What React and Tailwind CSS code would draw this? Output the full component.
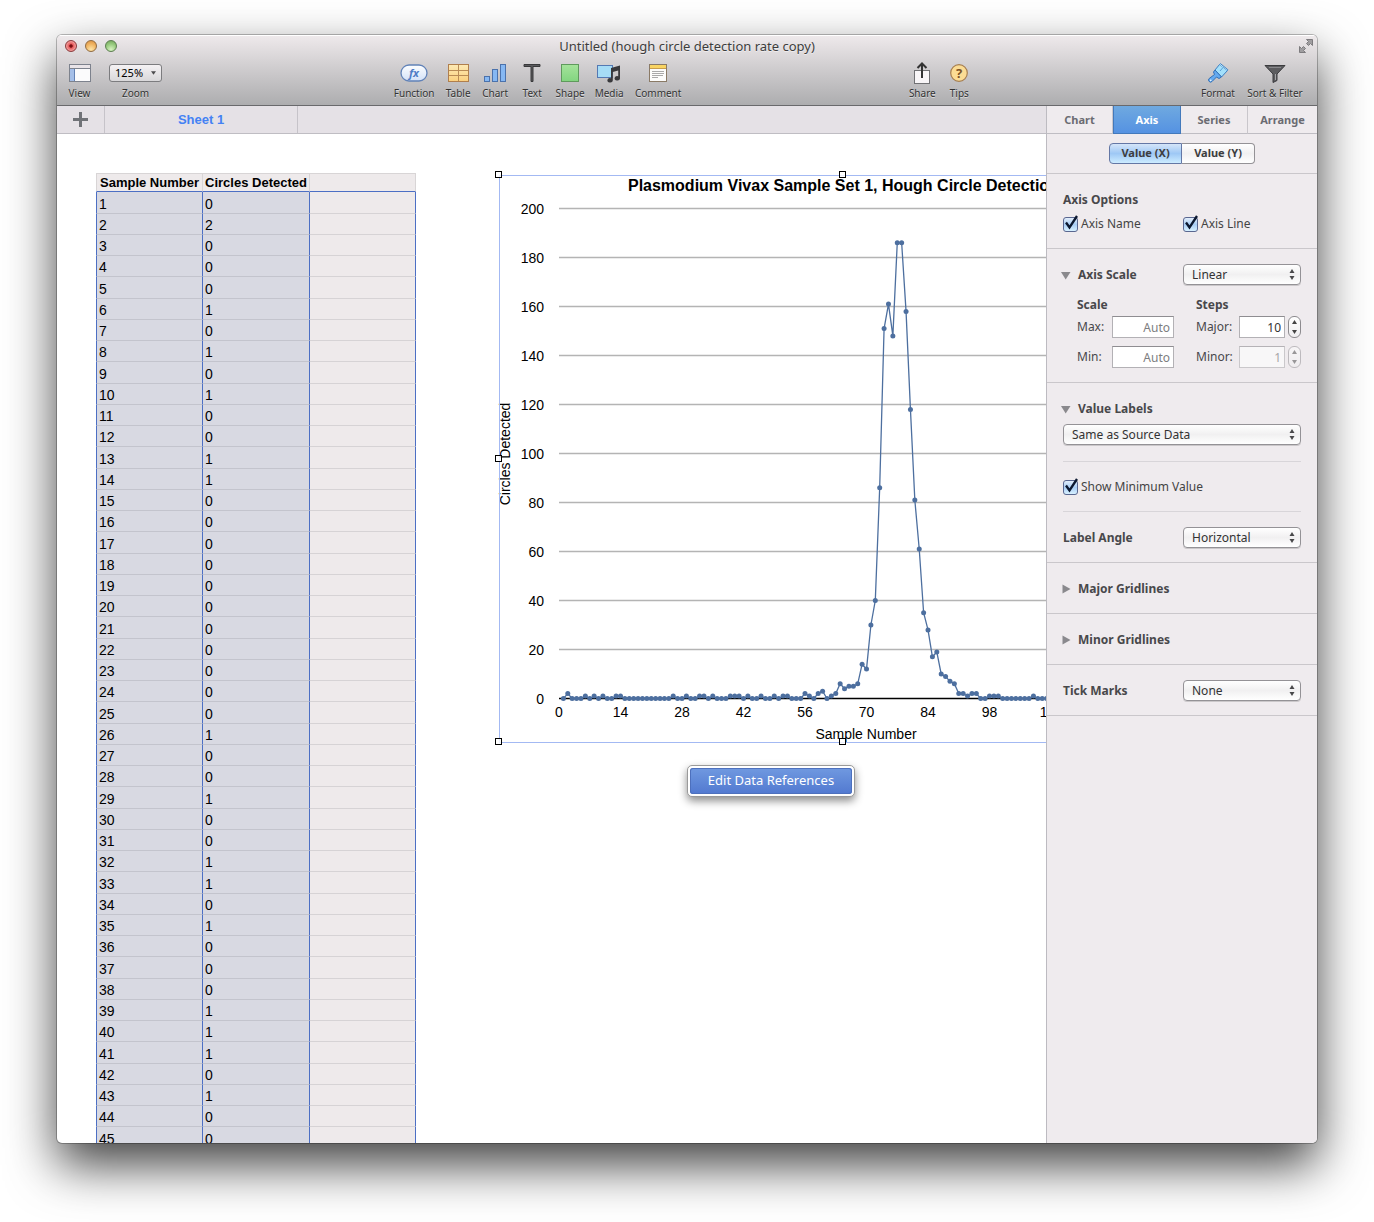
import React, { useState } from 'react';

// Circles found for samples 1..111
const DETECTED = [
  0, 2, 0, 0, 0, 1, 0, 1, 0, 1, 0, 0, 1, 1, 0, 0, 0, 0, 0, 0,
  0, 0, 0, 0, 0, 1, 0, 0, 1, 0, 0, 1, 1, 0, 1, 0, 0, 0, 1, 1,
  1, 0, 1, 0, 0, 1, 0, 0, 1, 0, 1, 1, 0, 0, 0, 2, 1, 0, 2, 3,
  0, 1, 2, 6, 4, 5, 5, 6, 14, 12, 30, 40, 86, 151, 161, 148, 186, 186, 158, 118,
  81, 61, 35, 28, 17, 19, 10, 9, 7, 6, 2, 2, 1, 2, 2, 0, 0, 1, 1, 1,
  0, 0, 0, 0, 0, 0, 0, 1, 0, 0, 0,
];

const Y_TICKS = [0, 20, 40, 60, 80, 100, 120, 140, 160, 180, 200];
const X_TICKS = [0, 14, 28, 42, 56, 70, 84, 98, 112, 126, 140];

const px = (n) => 63 + n * 4.393;
const py = (v) => 525.5 - v * 2.45;

/* ---------- Toolbar icons ---------- */

const ViewIcon = () => (
  <svg width="22" height="18" viewBox="0 0 22 18">
    <rect x="0.5" y="0.5" width="21" height="17" fill="#fbfbfc" stroke="#7d828d" />
    <rect x="1" y="1" width="20" height="3" fill="#e9e4e8" />
    <path d="M1 4.5h20" stroke="#7d828d" />
    <rect x="1" y="5" width="4" height="12" fill="#a5bfe8" />
    <path d="M5.5 5v12" stroke="#6482b4" />
  </svg>
);

const FunctionIcon = () => (
  <svg width="28" height="18" viewBox="0 0 28 18">
    <defs>
      <linearGradient id="fxFill" x1="0" y1="0" x2="0" y2="1">
        <stop offset="0" stopColor="#fdfeff" />
        <stop offset="1" stopColor="#d3e2f8" />
      </linearGradient>
    </defs>
    <rect x="1" y="1" width="26" height="16" rx="8" fill="url(#fxFill)" stroke="#6283b8" strokeWidth="1.3" />
    <text x="14" y="13" textAnchor="middle" fontSize="11" fontWeight="700" fontStyle="italic" fill="#4e7dc6">fx</text>
  </svg>
);

const TableIcon = () => (
  <svg width="21" height="18" viewBox="0 0 21 18">
    <defs>
      <linearGradient id="tblFill" x1="0" y1="0" x2="0" y2="1">
        <stop offset="0" stopColor="#fdeab5" />
        <stop offset="1" stopColor="#fbd07e" />
      </linearGradient>
    </defs>
    <rect x="0.5" y="0.5" width="20" height="17" fill="url(#tblFill)" stroke="#b07f4d" />
    <path d="M10.5 1v16M1 6.5h19M1 11.5h19" stroke="#b98b55" />
  </svg>
);

const ChartIcon = () => (
  <svg width="22" height="18" viewBox="0 0 22 18">
    <g fill="#86b8f3" stroke="#4b72ac">
      <rect x="0.5" y="12.5" width="5" height="5" />
      <rect x="8.5" y="5.5" width="5" height="12" />
      <rect x="16.5" y="0.5" width="5" height="17" />
    </g>
  </svg>
);

const TextIcon = () => (
  <svg width="18" height="18" viewBox="0 0 18 18">
    <path d="M1 0.5h16v2h-7v15h-2v-15h-7z" fill="#5a5a5d" stroke="#39393b" />
  </svg>
);

const ShapeIcon = () => (
  <svg width="18" height="18" viewBox="0 0 18 18">
    <defs>
      <linearGradient id="shapeFill" x1="0" y1="0" x2="0" y2="1">
        <stop offset="0" stopColor="#a5e39b" />
        <stop offset="1" stopColor="#82d580" />
      </linearGradient>
    </defs>
    <rect x="0.5" y="0.5" width="17" height="17" fill="url(#shapeFill)" stroke="#5f9a5d" />
  </svg>
);

const MediaIcon = () => (
  <svg width="24" height="19" viewBox="0 0 24 19">
    <rect x="0.5" y="1.5" width="15" height="12" fill="#a6dcf6" stroke="#5479b3" />
    <path d="M14 4l9-2.500v13a2.700 2.200 0 1 1-1.800-2.200V6.500l-5.400 1.500v8.500a2.700 2.200 0 1 1-1.800-2.200z" fill="#39393c" />
  </svg>
);

const CommentIcon = () => (
  <svg width="18" height="18" viewBox="0 0 18 18">
    <rect x="0.5" y="0.5" width="17" height="17" fill="#fcfcfb" stroke="#8a7a66" />
    <rect x="1" y="1" width="16" height="4" fill="#f9d462" />
    <path d="M1 4.5h16" stroke="#c99d4c" />
    <path d="M3 7.5h12M3 9.5h12M3 11.5h11M3 13.5h6" stroke="#a9a9a9" />
  </svg>
);

const ShareIcon = () => (
  <svg width="18" height="22" viewBox="0 0 18 22">
    <rect x="1.5" y="8.5" width="15" height="13" fill="#f8f5f7" stroke="#717174" />
    <path d="M9 16V3" stroke="#333" strokeWidth="2" />
    <path d="M4.5 6L9 1.5L13.5 6" fill="none" stroke="#333" strokeWidth="2" />
  </svg>
);

const TipsIcon = () => (
  <svg width="18" height="18" viewBox="0 0 18 18">
    <circle cx="9" cy="9" r="8.3" fill="#fbdc94" stroke="#a77f50" strokeWidth="1.2" />
    <text x="9" y="13.5" textAnchor="middle" fontSize="13" fontWeight="700" fill="#7b5225">?</text>
  </svg>
);

const FormatIcon = () => (
  <svg width="22" height="21" viewBox="0 0 22 21">
    <path d="M8 7L12.5 1.5L20.5 7.5L14.5 14z" fill="#a3e0fb" stroke="#3d7fc2" />
    <path d="M12.5 1.5L13.5 0.7L20.8 6.7L20.5 7.5" fill="#c6eeff" stroke="#3d7fc2" />
    <path d="M16 4.5l-3 3.5" stroke="#5a9fd6" />
    <path d="M8 7L14.5 14L12 15.5L9.5 14L5 18.5a2 2 0 1 1-2.8-3L7.5 11.5L6.5 9z" fill="#64aaf0" stroke="#346fb4" />
    <circle cx="3.7" cy="17.3" r="0.9" fill="#e4f4ff" />
  </svg>
);

const FilterIcon = () => (
  <svg width="22" height="19" viewBox="0 0 22 19">
    <path d="M1 1.5h20L13 10v6.5l-4 2V10z" fill="#5c5c5f" stroke="#3b3b3e" />
    <path d="M5 3.5h12" stroke="#88888b" />
    <path d="M11.5 10v6" stroke="#a4a4a7" />
  </svg>
);

const FullscreenIcon = () => (
  <svg width="14" height="14" viewBox="0 0 14 14" fill="#a09ea0" stroke="#7d7b7e">
    <path d="M7.5 0.5h6v6l-2-2l-2 2l-2-2l2-2z" />
    <path d="M6.5 13.5h-6v-6l2 2l2-2l2 2l-2 2z" />
  </svg>
);

/* ---------- Toolbar ---------- */

const ToolItem = ({ label, icon, width }) => (
  <button type="button" className={`flex flex-col items-center ${width}`}>
    <span className="flex h-[22px] items-center justify-center">{icon}</span>
    <span className="mt-[3px] whitespace-nowrap text-[10px] leading-3 text-[#333] [text-shadow:0_1px_0_rgba(255,255,255,0.5)]">
      {label}
    </span>
  </button>
);

const LIGHTS = [
  { name: 'Close', color: 'bg-[radial-gradient(circle_at_50%_50%,#7a0f12_18%,#e4585a_30%,#f29a98_65%,#c43c3e)] border-[#8a3a3c]' },
  { name: 'Minimise', color: 'bg-[radial-gradient(circle_at_50%_85%,#fde5a8,#f0b463_55%,#d98e3e)] border-[#8f6a41]' },
  { name: 'Enlarge', color: 'bg-[radial-gradient(circle_at_50%_85%,#d8f3c2,#98cb7f_55%,#6fa258)] border-[#5c7d50]' },
];

const Toolbar = () => (
  <header className="border-b border-[#69696c] bg-linear-to-b from-[#efeaec] to-[#adadaf] pt-px shadow-[inset_0_1px_0_#fff]">
    <div className="flex h-5 items-center justify-between px-1">
      <div className="flex w-16 gap-2 pl-1">
        {LIGHTS.map((light) => (
          <button key={light.name} type="button" aria-label={light.name} className={`size-3 rounded-full border ${light.color}`} />
        ))}
      </div>
      <h1 className="truncate text-[13px] leading-5 text-[#3d3d3d] [text-shadow:0_1px_0_rgba(255,255,255,0.5)]">
        Untitled (hough circle detection rate copy)
      </h1>
      <div className="flex w-16 justify-end">
        <button type="button" aria-label="Full screen"><FullscreenIcon /></button>
      </div>
    </div>

    <div className="flex items-start justify-between pt-[6px] pr-[10px] pb-[6px] pl-1">
      <div className="flex">
        <ToolItem label="View" icon={<ViewIcon />} width="w-[37px]" />
        <div className="flex w-[75px] flex-col items-center">
          <div className="grid h-[22px] items-center">
            <select
              id="zoom"
              defaultValue="125%"
              className="col-start-1 row-start-1 h-[18px] w-[53px] appearance-none rounded-[3px] border border-[#7c7c7f] bg-linear-to-b from-[#f5f2f4] to-[#d9d8da] pl-[5px] text-[11px] leading-4 text-black"
            >
              <option>125%</option>
              <option>100%</option>
            </select>
            <svg className="pointer-events-none col-start-1 row-start-1 mr-[6px] justify-self-end" width="5" height="4" viewBox="0 0 6 4">
              <path d="M0 0h6L3 4z" fill="#4c4c4e" />
            </svg>
          </div>
          <label htmlFor="zoom" className="mt-[3px] text-[10px] leading-3 text-[#333] [text-shadow:0_1px_0_rgba(255,255,255,0.5)]">
            Zoom
          </label>
        </div>
      </div>
      <div className="flex">
        <ToolItem label="Function" icon={<FunctionIcon />} width="w-[51px]" />
        <ToolItem label="Table" icon={<TableIcon />} width="w-[37px]" />
        <ToolItem label="Chart" icon={<ChartIcon />} width="w-[37px]" />
        <ToolItem label="Text" icon={<TextIcon />} width="w-[37px]" />
        <ToolItem label="Shape" icon={<ShapeIcon />} width="w-[39px]" />
        <ToolItem label="Media" icon={<MediaIcon />} width="w-[39px]" />
        <ToolItem label="Comment" icon={<CommentIcon />} width="w-[59px]" />
      </div>
      <div className="flex">
        <ToolItem label="Share" icon={<ShareIcon />} width="w-[38px]" />
        <ToolItem label="Tips" icon={<TipsIcon />} width="w-9" />
      </div>
      <div className="flex">
        <ToolItem label="Format" icon={<FormatIcon />} width="w-[50px]" />
        <ToolItem label="Sort & Filter" icon={<FilterIcon />} width="w-16" />
      </div>
    </div>
  </header>
);

/* ---------- Sheet ---------- */

const SheetTabs = () => (
  <nav className="flex h-7 border-b border-[#bfbdc3] bg-[#e5e1e6]">
    <button type="button" aria-label="Add sheet" className="flex w-12 items-center justify-center border-r border-[#c6c3c9]">
      <svg width="15" height="15" viewBox="0 0 15 15">
        <path d="M7.5 0v15M0 7.5h15" stroke="#707277" strokeWidth="3" />
      </svg>
    </button>
    <button type="button" className="w-[193px] border-r border-[#c6c3c9] font-['Liberation_Sans',sans-serif] text-[13px] font-bold text-[#4482f4]">
      Sheet 1
    </button>
  </nav>
);

const DataTable = () => (
  <table className="w-80 shrink-0 table-fixed border-separate border-spacing-0 self-start bg-[#eeeaeb] font-['Liberation_Sans',sans-serif] text-black">
    <colgroup>
      <col className="w-[106px]" />
      <col className="w-[107px]" />
      <col className="w-[107px]" />
    </colgroup>
    <thead>
      <tr className="h-[19px] text-[13px] leading-4">
        <th className="border-t border-l border-t-[#d8d5d6] border-l-[#d8d5d6] border-b border-b-[#4c6fc4] p-0 align-bottom whitespace-nowrap">Sample Number</th>
        <th className="border-t border-l border-t-[#d8d5d6] border-l-[#d8d5d6] border-b border-b-[#4c6fc4] p-0 align-bottom whitespace-nowrap">Circles Detected</th>
        <th className="border-x border-t border-x-[#d8d5d6] border-t-[#d8d5d6] border-b border-b-[#4c6fc4] p-0" />
      </tr>
    </thead>
    <tbody className="text-[14px] leading-[18px]">
      {DETECTED.slice(0, 45).map((value, i) => (
        <tr key={i} className="h-[21px] nth-[4n+1]:h-[22px]">
          <td className="border-b border-l border-b-[#c3c4cd] border-l-[#4c6fc4] bg-[#d8d9e2] py-0 pr-0 pl-[2px] align-bottom">{i + 1}</td>
          <td className="border-b border-l border-b-[#c3c4cd] border-l-[#4c6fc4] bg-[#d8d9e2] py-0 pr-0 pl-[2px] align-bottom">{value}</td>
          <td className="border-x border-b border-x-[#4c6fc4] border-b-[#d6d3d5] p-0" />
        </tr>
      ))}
    </tbody>
  </table>
);

const HANDLES = [
  [2.5, 1.5], [346.5, 1.5], [690.5, 1.5],
  [2.5, 285.5], [690.5, 285.5],
  [2.5, 568.5], [346.5, 568.5], [690.5, 568.5],
];

const CirclesChart = () => (
  <svg width="694" height="570" viewBox="0 0 694 570" className="shrink-0 self-start overflow-visible font-['Liberation_Sans',sans-serif]" role="img" aria-label="Circles detected per sample">
    {Y_TICKS.map((v) => (
      <g key={v}>
        <path d={`M${px(0)} ${py(v)}H${px(140)}`} stroke={v === 0 ? '#000' : '#b4b4b4'} strokeWidth="1.4" />
        <text x="48" y={py(v) + 5.5} textAnchor="end" fontSize="14">{v}</text>
      </g>
    ))}
    {X_TICKS.map((n) => (
      <text key={n} x={px(n)} y="544" textAnchor="middle" fontSize="14">{n}</text>
    ))}
    <text x="367" y="18" textAnchor="middle" fontSize="16" fontWeight="700">
      Plasmodium Vivax Sample Set 1, Hough Circle Detection Rate
    </text>
    <text x="370" y="566" textAnchor="middle" fontSize="14">Sample Number</text>
    <text transform="translate(14 281) rotate(-90)" textAnchor="middle" fontSize="14">Circles Detected</text>
    <polyline
      points={DETECTED.map((v, i) => `${px(i + 1)},${py(v)}`).join(' ')}
      fill="none"
      stroke="#4d6f9f"
      strokeWidth="1.3"
    />
    {DETECTED.map((v, i) => (
      <circle key={i} cx={px(i + 1)} cy={py(v)} r="2.5" fill="#4d6f9f" />
    ))}
    <rect x="3.5" y="2.5" width="687" height="567" fill="none" stroke="#a3b9f3" />
    {HANDLES.map(([x, y]) => (
      <rect key={`${x}-${y}`} x={x - 3} y={y - 3} width="6" height="6" fill="#fff" fillOpacity="0.8" stroke="#000" />
    ))}
  </svg>
);

/* ---------- Inspector ---------- */

const Popup = ({ id, options, className, label }) => (
  <div className={`grid items-center ${className}`}>
    <select
      id={id}
      aria-label={label}
      className="col-start-1 row-start-1 h-[21px] w-full appearance-none rounded-[4px] border border-[#949296] bg-linear-to-b from-white via-[#f1f0f1] to-white pl-2 text-xs leading-4 text-[#333] shadow-[0_1px_0_rgba(0,0,0,0.15)]"
    >
      {options.map((o) => <option key={o}>{o}</option>)}
    </select>
    <svg className="pointer-events-none col-start-1 row-start-1 mr-[6px] justify-self-end" width="6" height="11" viewBox="0 0 6 11" fill="#48484a">
      <path d="M3 0L5.5 4h-5zM3 11L5.5 7h-5z" />
    </svg>
  </div>
);

const Check = ({ label, className = '' }) => {
  const [on, setOn] = useState(true);
  return (
    <label className={`flex h-[18px] items-center gap-[3px] text-xs text-[#444] ${className}`}>
      <span className="grid">
        <input
          type="checkbox"
          checked={on}
          onChange={() => setOn(!on)}
          className="col-start-1 row-start-1 size-[15px] appearance-none self-end rounded-[3px] border border-[#5a6790] bg-linear-to-b from-[#e3eefb] via-[#a9cdf5] to-[#d8f1ff]"
        />
        {on && (
          <svg className="pointer-events-none col-start-1 row-start-1 overflow-visible" width="15" height="15" viewBox="0 0 15 15">
            <path d="M3 5.5l3.5 5L14 -1" fill="none" stroke="#0c1830" strokeWidth="2.3" />
          </svg>
        )}
      </span>
      {label}
    </label>
  );
};

const Disclosure = ({ open = false, children }) => (
  <button type="button" aria-expanded={open} className="flex h-[18px] items-center gap-[7px] text-xs font-bold text-[#48484b]">
    <svg width="10" height="10" viewBox="0 0 10 10" fill="#8a898d">
      <path d={open ? 'M0 2h9.5L4.7 9.5z' : 'M1.5 0.5v9L9.500 5z'} />
    </svg>
    {children}
  </button>
);

const Stepper = ({ label, disabled }) => (
  <div className={`flex h-[22px] w-[13px] flex-col overflow-hidden rounded-[6px] border border-[#8d8b8f] bg-linear-to-b from-white to-[#efeef0] ${disabled ? 'opacity-50' : ''}`}>
    <button type="button" disabled={disabled} aria-label={`Increase ${label}`} className="flex h-[10px] items-center justify-center">
      <svg width="5" height="4" viewBox="0 0 5 4"><path d="M2.5 0L5 4H0z" fill="#444" /></svg>
    </button>
    <button type="button" disabled={disabled} aria-label={`Decrease ${label}`} className="flex h-[10px] items-center justify-center">
      <svg width="5" height="4" viewBox="0 0 5 4"><path d="M0 0h5L2.5 4z" fill="#444" /></svg>
    </button>
  </div>
);

const INPUT = 'h-[22px] border border-[#b3b1b5] border-t-[#8f8d91] bg-white pr-[3px] text-right text-xs placeholder:text-[#7d7d80]';

const ScaleField = ({ id, label }) => (
  <div className="flex w-[97px] items-center justify-between">
    <label htmlFor={id}>{label}</label>
    <input id={id} type="text" placeholder="Auto" className={`w-[62px] ${INPUT}`} />
  </div>
);

const StepField = ({ id, label, value, disabled }) => (
  <div className="flex w-[105px] items-center">
    <label htmlFor={id} className="flex-1">{label}</label>
    <input
      id={id}
      type="text"
      defaultValue={value}
      disabled={disabled}
      className={`mr-[3px] w-[46px] ${INPUT} ${disabled ? 'text-[#777] opacity-60' : 'text-[#333]'}`}
    />
    <Stepper label={id} disabled={disabled} />
  </div>
);

const TABS = [
  { name: 'Chart', width: 'w-[66px]' },
  { name: 'Axis', width: 'w-[68px]' },
  { name: 'Series', width: 'w-[67px]' },
  { name: 'Arrange', width: 'flex-1' },
];

const Inspector = () => {
  const [tab, setTab] = useState('Axis');
  const [axis, setAxis] = useState('X');

  return (
    <aside className="w-[271px] shrink-0 border-l border-[#bdbbc1] bg-[#efebee] text-xs text-[#48484b]">
      <nav className="flex h-7">
        {TABS.map(({ name, width }) => (
          <button
            key={name}
            type="button"
            onClick={() => setTab(name)}
            className={`${width} pt-px text-[11px] font-bold ${
              tab === name
                ? 'border border-t-0 border-[#4379bb] bg-linear-to-b from-[#6fa9e0] to-[#5592e2] text-white'
                : 'border-b border-[#bfbdc3] text-[#6b6b72] not-last:border-r not-last:border-r-[#c9c6cb]'
            }`}
          >
            {name}
          </button>
        ))}
      </nav>

      <div className="flex h-10 items-center justify-center border-b border-[#cac7cb]">
        {['X', 'Y'].map((a) => (
          <button
            key={a}
            type="button"
            onClick={() => setAxis(a)}
            className={`h-[21px] w-[73px] border text-[11px] font-bold text-[#3d3d40] first:rounded-l-[4px] last:rounded-r-[4px] ${
              axis === a
                ? 'border-[#6477a5] bg-linear-to-b from-[#d5e5f8] via-[#9ec8f5] to-[#cdecff]'
                : 'border-[#949296] bg-linear-to-b from-white via-[#f1f0f1] to-white first:border-r-0 last:border-l-0'
            }`}
          >
            Value ({a})
          </button>
        ))}
      </div>

      <section className="border-b border-[#cac7cb] px-4 pt-[17px] pb-[15px]">
        <h2 className="leading-[18px] font-bold">Axis Options</h2>
        <div className="mt-[6px] flex">
          <Check label="Axis Name" className="w-[120px]" />
          <Check label="Axis Line" />
        </div>
      </section>

      <section className="border-b border-[#cac7cb] pt-[15px] pr-4 pb-[14px] pl-[13px]">
        <div className="flex items-center justify-between pl-px">
          <Disclosure open>Axis Scale</Disclosure>
          <Popup label="Axis Scale" options={['Linear', 'Logarithmic']} className="w-[118px]" />
        </div>
        <div className="mt-[11px] flex justify-between pl-[17px]">
          <div>
            <h3 className="mb-[2px] leading-[18px] font-bold">Scale</h3>
            <div className="flex flex-col gap-2">
              <ScaleField id="max" label="Max:" />
              <ScaleField id="min" label="Min:" />
            </div>
          </div>
          <div>
            <h3 className="mb-[2px] leading-[18px] font-bold">Steps</h3>
            <div className="flex flex-col gap-2">
              <StepField id="major" label="Major:" value="10" />
              <StepField id="minor" label="Minor:" value="1" disabled />
            </div>
          </div>
        </div>
      </section>

      <section className="border-b border-[#cac7cb] pt-[17px] pr-4 pb-[14px] pl-[14px]">
        <Disclosure open>Value Labels</Disclosure>
        <div className="pl-[2px]">
          <Popup label="Value Labels" options={['Same as Source Data', 'Number']} className="mt-[6px]" />
          <div className="mt-4 border-y border-[#d8d5d9] pt-4 pb-[15px]">
            <Check label="Show Minimum Value" />
          </div>
          <div className="mt-[15px] flex items-center justify-between">
            <label htmlFor="angle" className="font-bold">Label Angle</label>
            <Popup id="angle" options={['Horizontal', 'Vertical']} className="w-[118px]" />
          </div>
        </div>
      </section>

      <section className="flex h-[51px] items-center border-b border-[#cac7cb] px-[14px] pt-px">
        <Disclosure>Major Gridlines</Disclosure>
      </section>
      <section className="flex h-[51px] items-center border-b border-[#cac7cb] px-[14px] pt-px">
        <Disclosure>Minor Gridlines</Disclosure>
      </section>
      <section className="flex h-[51px] items-center justify-between border-b border-[#cac7cb] px-4 pt-px">
        <label htmlFor="ticks" className="font-bold">Tick Marks</label>
        <Popup id="ticks" options={['None', 'Inside', 'Outside']} className="w-[118px]" />
      </section>
    </aside>
  );
};

function App() {
  return (
    <div className="flex h-screen flex-col bg-white px-[57px] pt-[35px] pb-[79px] font-['Noto_Sans','Open_Sans',sans-serif]">
      <div className="flex min-h-0 flex-1 flex-col overflow-hidden rounded-[5px] bg-white shadow-[0_0_0_1px_rgba(0,0,0,0.25),0_22px_50px_rgba(0,0,0,0.75)]">
        <Toolbar />
        <div className="flex min-h-0 flex-1">
          <div className="flex min-w-0 flex-1 flex-col">
            <SheetTabs />
            <main className="flex min-h-0 flex-1 gap-20 overflow-hidden pt-[39px] pl-[39px]">
              <DataTable />
              <div className="flex min-w-0 flex-1 flex-col items-center">
                <CirclesChart />
                <button
                  type="button"
                  className="mt-[22px] h-8 w-[168px] rounded-[5px] border border-[#9a9a9a] bg-white p-[2px] shadow-[0_4px_8px_rgba(0,0,0,0.45)]"
                >
                  <span className="flex h-full items-center justify-center rounded-[3px] bg-linear-to-b from-[#7099e0] to-[#5279d0] text-[13px] text-white shadow-[inset_0_0_0_1px_#4d70bd]">
                    Edit Data References
                  </span>
                </button>
              </div>
            </main>
          </div>
          <Inspector />
        </div>
      </div>
    </div>
  );
}

export default App;
